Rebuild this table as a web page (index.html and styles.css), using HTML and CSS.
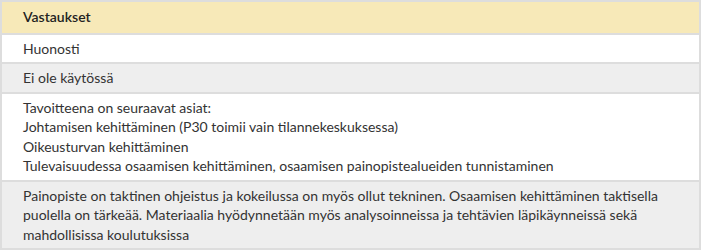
FILE: index.html
```html
<!DOCTYPE html>
<html lang="fi">
<head>
    <meta charset="UTF-8">
    <title>Vastaukset</title>
    <link rel="stylesheet" href="styles.css">
</head>
<body>
    <table class="answers">
        <thead>
            <tr><th>Vastaukset</th></tr>
        </thead>
        <tbody>
            <tr><td>Huonosti</td></tr>
            <tr><td>Ei ole käytössä</td></tr>
            <tr><td>Tavoitteena on seuraavat asiat:<br>Johtamisen kehittäminen (P30 toimii vain tilannekeskuksessa)<br>Oikeusturvan kehittäminen<br>Tulevaisuudessa osaamisen kehittäminen, osaamisen painopistealueiden tunnistaminen</td></tr>
            <tr><td>Painopiste on taktinen ohjeistus ja kokeilussa on myös ollut tekninen. Osaamisen kehittäminen taktisella puolella on tärkeää. Materiaalia hyödynnetään myös analysoinneissa ja tehtävien läpikäynneissä sekä mahdollisissa koulutuksissa</td></tr>
        </tbody>
    </table>
</body>
</html>
```

FILE: styles.css
```css
body {
    margin: 0;
    background: #fff;
    font-family: Lato, 'Open Sans', sans-serif;
    font-size: 14px;
    color: #333;
}

.answers {
    width: 701px;
    border-collapse: collapse;
    border: 2px solid #ddd;
}

.answers th,
.answers td {
    border: 2px solid #ddd;
    padding: 4px 21px;
    line-height: 19.5px;
    text-align: left;
}

.answers th {
    background: #f7e9b8;
    font-weight: 600;
    color: #222;
    padding-top: 5px;
    padding-bottom: 6px;
}

.answers tbody tr:nth-child(even) td {
    background: #eee;
}
```
